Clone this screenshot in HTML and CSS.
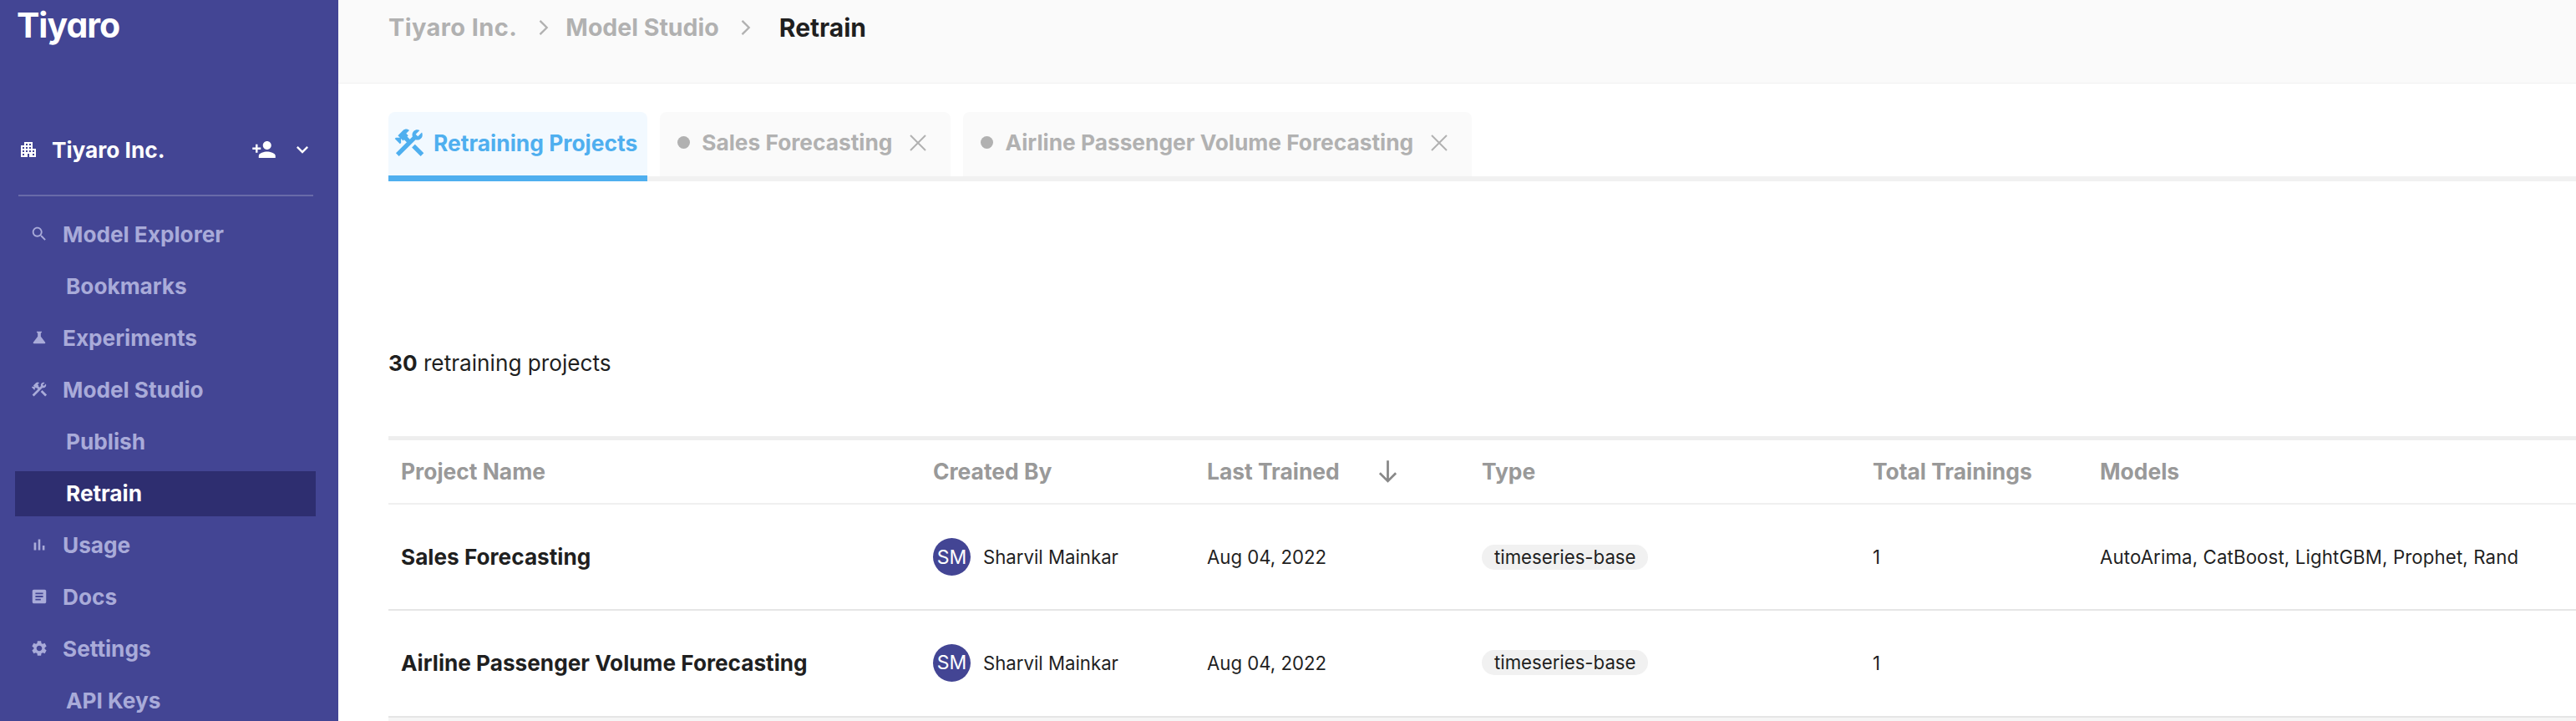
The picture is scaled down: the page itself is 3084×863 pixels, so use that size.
FILE: index.html
```html
<!DOCTYPE html>
<html lang="en">

<head>
    <meta charset="UTF-8">
    <title>Tiyaro - Retrain</title>
    <link rel="stylesheet" href="styles.css">
</head>

<body>
    <aside class="sidebar">
        <div class="logo">Tiyaro</div>
        <div class="org">
            <svg class="org-icon" viewBox="0 0 24 24"><path d="M17 11V3H7v4H3v14h8v-4h2v4h8V11h-4zM7 19H5v-2h2v2zm0-4H5v-2h2v2zm0-4H5V9h2v2zm4 4H9v-2h2v2zm0-4H9V9h2v2zm0-4H9V5h2v2zm4 8h-2v-2h2v2zm0-4h-2V9h2v2zm0-4h-2V5h2v2zm4 12h-2v-2h2v2zm0-4h-2v-2h2v2z"/></svg>
            <span class="org-name">Tiyaro Inc.</span>
            <svg class="org-add" viewBox="0 0 24 24"><path d="M15 12c2.21 0 4-1.79 4-4s-1.79-4-4-4-4 1.79-4 4 1.79 4 4 4zm-9-2V7H4v3H1v2h3v3h2v-3h3v-2H6zm9 4c-2.67 0-8 1.34-8 4v2h16v-2c0-2.66-5.33-4-8-4z"/></svg>
            <svg class="org-more" viewBox="0 0 24 24"><path d="M16.59 8.59L12 13.17 7.41 8.59 6 10l6 6 6-6z"/></svg>
        </div>
        <div class="divider"></div>
        <ul class="nav">
            <li class="nav-item">
                <svg class="nav-icon" viewBox="0 0 24 24"><path d="M15.5 14h-.79l-.28-.27C15.41 12.59 16 11.11 16 9.5 16 5.91 13.09 3 9.5 3S3 5.91 3 9.5 5.91 16 9.5 16c1.61 0 3.09-.59 4.23-1.57l.27.28v.79l5 4.99L20.49 19l-4.99-5zm-6 0C7.01 14 5 11.99 5 9.5S7.01 5 9.5 5 14 7.01 14 9.5 11.99 14 9.5 14z"/></svg>
                Model Explorer
            </li>
            <li class="nav-item sub">Bookmarks</li>
            <li class="nav-item">
                <svg class="nav-icon" viewBox="0 0 24 24"><path d="M19.8 18.4L14 10.67V6.5l1.35-1.69c.26-.33.03-.81-.39-.81H9.04c-.42 0-.65.48-.39.81L10 6.5v4.17L4.2 18.4c-.49.66-.02 1.6.8 1.6h14c.82 0 1.29-.94.8-1.6z"/></svg>
                Experiments
            </li>
            <li class="nav-item">
                <svg class="nav-icon" viewBox="0 0 24 24"><path d="M13.783 15.172l2.121-2.121 5.996 5.996-2.121 2.121zM17.5 10c1.93 0 3.5-1.57 3.5-3.5 0-.58-.16-1.12-.41-1.6l-2.7 2.7-1.49-1.49 2.7-2.7c-.48-.25-1.02-.41-1.6-.41C15.57 3 14 4.57 14 6.5c0 .41.08.8.21 1.16l-1.85 1.85-1.78-1.78.71-.71-1.41-1.41L12 3.49c-1.17-1.17-3.07-1.17-4.24 0L4.22 7.03l1.41 1.41H2.81l-.71.71 3.54 3.54.71-.71V9.15l1.41 1.41.71-.71 1.78 1.78-7.41 7.41 2.12 2.12L16.34 9.79c.36.13.75.21 1.16.21z"/></svg>
                Model Studio
            </li>
            <li class="nav-item sub">Publish</li>
            <li class="nav-item sub active">Retrain</li>
            <li class="nav-item">
                <svg class="nav-icon" viewBox="0 0 24 24"><path d="M5 9.2h3V19H5zM10.6 5h2.8v14h-2.8zm5.6 8H19v6h-2.8z"/></svg>
                Usage
            </li>
            <li class="nav-item">
                <svg class="nav-icon" viewBox="0 0 24 24"><path d="M19 3H5c-1.1 0-2 .9-2 2v14c0 1.1.9 2 2 2h14c1.1 0 2-.9 2-2V5c0-1.1-.9-2-2-2zm-5 14H7v-2h7v2zm3-4H7v-2h10v2zm0-4H7V7h10v2z"/></svg>
                Docs
            </li>
            <li class="nav-item">
                <svg class="nav-icon" viewBox="0 0 24 24"><path d="M19.14 12.94c.04-.3.06-.61.06-.94 0-.32-.02-.64-.07-.94l2.03-1.58c.18-.14.23-.41.12-.61l-1.92-3.32c-.12-.22-.37-.29-.59-.22l-2.39.96c-.5-.38-1.03-.7-1.62-.94l-.36-2.54c-.04-.24-.24-.41-.48-.41h-3.84c-.24 0-.43.17-.47.41l-.36 2.54c-.59.24-1.13.57-1.62.94l-2.39-.96c-.22-.08-.47 0-.59.22L2.74 8.87c-.12.21-.08.47.12.61l2.03 1.58c-.05.3-.09.63-.09.94s.02.64.07.94l-2.03 1.58c-.18.14-.23.41-.12.61l1.92 3.32c.12.22.37.29.59.22l2.39-.96c.5.38 1.03.7 1.62.94l.36 2.54c.05.24.24.41.48.41h3.84c.24 0 .44-.17.47-.41l.36-2.54c.59-.24 1.13-.56 1.62-.94l2.39.96c.22.08.47 0 .59-.22l1.92-3.32c.12-.22.07-.47-.12-.61l-2.01-1.58zM12 15.6c-1.98 0-3.6-1.62-3.6-3.6s1.62-3.6 3.6-3.6 3.6 1.62 3.6 3.6-1.62 3.6-3.6 3.6z"/></svg>
                Settings
            </li>
            <li class="nav-item sub">API Keys</li>
        </ul>
    </aside>

    <main class="main">
        <header class="crumbs">
            <span class="crumb-org">Tiyaro Inc.</span>
            <svg class="crumb-sep" viewBox="0 0 24 24"><path d="M9 5l7 7-7 7" /></svg>
            <span>Model Studio</span>
            <svg class="crumb-sep" viewBox="0 0 24 24"><path d="M9 5l7 7-7 7" /></svg>
            <span class="crumb-current">Retrain</span>
        </header>

        <div class="content">
            <div class="tabs">
                <div class="tab tab-active">
                    <svg class="tab-icon" viewBox="0 0 24 24"><path d="M13.783 15.172l2.121-2.121 5.996 5.996-2.121 2.121zM17.5 10c1.93 0 3.5-1.57 3.5-3.5 0-.58-.16-1.12-.41-1.6l-2.7 2.7-1.49-1.49 2.7-2.7c-.48-.25-1.02-.41-1.6-.41C15.57 3 14 4.57 14 6.5c0 .41.08.8.21 1.16l-1.85 1.85-1.78-1.78.71-.71-1.41-1.41L12 3.49c-1.17-1.17-3.07-1.17-4.24 0L4.22 7.03l1.41 1.41H2.81l-.71.71 3.54 3.54.71-.71V9.15l1.41 1.41.71-.71 1.78 1.78-7.41 7.41 2.12 2.12L16.34 9.79c.36.13.75.21 1.16.21z"/></svg>
                    Retraining Projects
                </div>
                <div class="tab">
                    <span class="tab-dot"></span>
                    Sales Forecasting
                    <svg class="tab-close" viewBox="0 0 24 24"><path d="M3 3l18 18M21 3L3 21"/></svg>
                </div>
                <div class="tab">
                    <span class="tab-dot"></span>
                    Airline Passenger Volume Forecasting
                    <svg class="tab-close" viewBox="0 0 24 24"><path d="M3 3l18 18M21 3L3 21"/></svg>
                </div>
            </div>

            <p class="count"><b>30</b> retraining projects</p>

            <div class="table">
                <div class="row head">
                    <div>Project Name</div>
                    <div>Created By</div>
                    <div class="sorted">Last Trained
                        <svg class="sort-arrow" viewBox="0 0 24 24"><path d="M12 3v18M5 14l7 7 7-7"/></svg>
                    </div>
                    <div>Type</div>
                    <div>Total Trainings</div>
                    <div>Models</div>
                </div>
                <div class="row">
                    <div class="name">Sales Forecasting</div>
                    <div class="user"><span class="avatar">SM</span>Sharvil Mainkar</div>
                    <div>Aug 04, 2022</div>
                    <div><span class="pill">timeseries-base</span></div>
                    <div>1</div>
                    <div class="models">AutoArima, CatBoost, LightGBM, Prophet, Rand</div>
                </div>
                <div class="row row-last">
                    <div class="name">Airline Passenger Volume Forecasting</div>
                    <div class="user"><span class="avatar">SM</span>Sharvil Mainkar</div>
                    <div>Aug 04, 2022</div>
                    <div><span class="pill">timeseries-base</span></div>
                    <div>1</div>
                    <div></div>
                </div>
                <div class="table-foot"></div>
            </div>
        </div>
    </main>
</body>

</html>
```

FILE: styles.css
```css
* {
    margin: 0;
    padding: 0;
    box-sizing: border-box;
}

html,
body {
    height: 100%;
    overflow: hidden;
}

body {
    display: flex;
    font-family: Inter, "Liberation Sans", sans-serif;
    background-color: #fff;
    color: #1f1f1f;
}

/* sidebar */
.sidebar {
    width: 405px;
    flex-shrink: 0;
    height: 863px;
    overflow: hidden;
    padding: 0 27px 0 18px;
    background-color: #434594;
    color: #fff;
}

.logo {
    height: 148px;
    padding: 4px 0 0 2px;
    font-size: 41px;
    font-weight: 700;
    line-height: 52px;
    letter-spacing: -1px;
    font-feature-settings: "cv11";
}

.org {
    display: flex;
    align-items: center;
    height: 62px;
    padding-left: 4px;
    font-size: 26.2px;
    font-weight: 700;
}

.org-icon {
    width: 24px;
    height: 24px;
    margin-right: 16px;
    fill: #fff;
}

.org-name {
    flex: 1;
}

.org-add {
    width: 30px;
    height: 30px;
    margin-right: 17px;
    fill: #fff;
}

.org-more {
    width: 28px;
    height: 28px;
    margin-right: 2px;
    fill: #fff;
}

.divider {
    height: 2px;
    margin: 23px 3px 19px 4px;
    background-color: #696ba9;
}

.nav {
    list-style: none;
}

.nav-item {
    display: flex;
    align-items: center;
    height: 54px;
    margin: 4px 0 8px;
    padding: 0 0 2px 18px;
    color: #a9abd9;
    font-size: 26.2px;
    font-weight: 700;
    white-space: nowrap;
}

.nav-item.sub {
    padding-left: 61px;
}

.nav-item.active {
    background-color: #2e2e70;
    color: #fff;
}

.nav-icon {
    width: 22px;
    height: 22px;
    margin-right: 17px;
    fill: #a9abd9;
}

/* top bar */
.main {
    flex: 1;
    min-width: 0;
}

.crumbs {
    display: flex;
    align-items: center;
    height: 100px;
    padding: 0 0 34px 60px;
    background-color: #fafafa;
    border-bottom: 1px solid #f0f0f0;
    color: #b1b1b1;
    font-size: 28.5px;
    font-weight: 700;
}

.crumb-org {
    font-size: 29px;
    letter-spacing: .4px;
}

.crumb-sep {
    width: 28px;
    height: 28px;
    margin: 0 17px;
    fill: none;
    stroke: #b1b1b1;
    stroke-width: 2;
}

.crumb-org + .crumb-sep {
    margin-right: 13px;
}

.crumb-current {
    margin-left: 10px;
    color: #1f1f1f;
    font-size: 30px;
}

/* tabs */
.content {
    padding: 34px 0 0 60px;
}

.tabs {
    display: flex;
    gap: 15px;
    height: 83px;
    border-bottom: 6px solid #f1f1f1;
}

.tab {
    display: flex;
    align-items: center;
    height: 77px;
    padding: 0 27px 4px 21px;
    background-color: #fafafa;
    border-radius: 8px 8px 0 0;
    color: #b1b1b1;
    font-size: 26.3px;
    font-weight: 700;
}

.tab-active {
    height: 83px;
    padding: 0 12px 2px 4px;
    background-color: #f2f9ff;
    border-bottom: 7px solid #4fafef;
    color: #4fafef;
    font-size: 26.4px;
}

.tab-icon {
    width: 42px;
    height: 42px;
    margin-right: 8px;
    fill: #4fafef;
}

.tab-dot {
    width: 15px;
    height: 15px;
    margin-right: 14px;
    border-radius: 50%;
    background-color: #b1b1b1;
}

.tab-close {
    width: 24px;
    height: 24px;
    margin-left: 19px;
    fill: none;
    stroke: #b1b1b1;
    stroke-width: 2;
}

/* table */
.count {
    margin: 202px 0 71px;
    height: 32px;
    font-size: 26.2px;
    line-height: 32px;
}

.count b {
    font-weight: 700;
}

.table {
    border-top: 5px solid #eee;
}

.row {
    display: grid;
    grid-template-columns: 637px 328px 329px 468px 272px 1fr;
    align-items: center;
    height: 127px;
    border-bottom: 2px solid #e5e5e5;
    font-size: 22.2px;
    white-space: nowrap;
}

.row > div {
    padding-left: 15px;
}

.row.head {
    height: 77px;
    padding-bottom: 2px;
    border-bottom: 2px solid #f0f0f0;
    color: #999;
    font-size: 26.4px;
    font-weight: 700;
}

.row-last {
    height: 128px;
    padding-bottom: 2px;
}

.table-foot {
    height: 40px;
    background-color: #f5f5f5;
}

.sorted {
    display: flex;
    align-items: center;
}

.sort-arrow {
    width: 33px;
    height: 33px;
    margin-left: 41px;
    fill: none;
    stroke: #888;
    stroke-width: 2;
}

.name {
    font-size: 26.2px;
    font-weight: 700;
}

.models {
    letter-spacing: .15px;
}

.user {
    display: flex;
    align-items: center;
}

.avatar {
    display: flex;
    align-items: center;
    justify-content: center;
    width: 45px;
    height: 45px;
    margin-right: 15px;
    border-radius: 50%;
    background-color: #434594;
    color: #fff;
    font-size: 23px;
}

.pill {
    display: inline-block;
    height: 30px;
    padding: 0 15px;
    border-radius: 15px;
    background-color: #f1f1f1;
    line-height: 30px;
}
```
